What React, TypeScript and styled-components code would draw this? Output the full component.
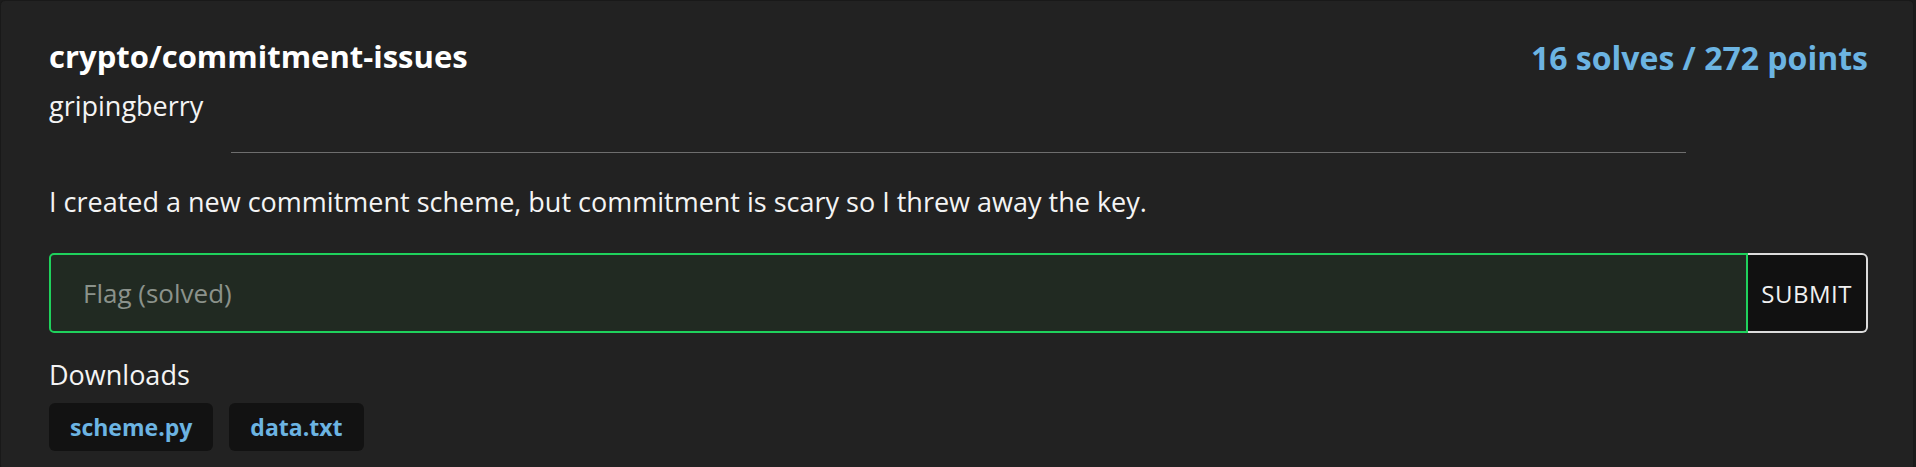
import styled, { createGlobalStyle } from "styled-components";

interface Challenge {
  category: string;
  name: string;
  author: string;
  solves: number;
  points: number;
  description: string;
  files: string[];
}

const challenge: Challenge = {
  category: "crypto",
  name: "commitment-issues",
  author: "gripingberry",
  solves: 16,
  points: 272,
  description:
    "I created a new commitment scheme, but commitment is scary so I threw away the key.",
  files: ["scheme.py", "data.txt"],
};

const GlobalStyle = createGlobalStyle`
  html, body {
    margin: 0;
    background: #1b1b1b;
  }
  body {
    font-family: "Open Sans", "Noto Sans", sans-serif;
    color: #f4f4f4;
  }
`;

const Card = styled.section`
  box-sizing: border-box;
  width: 1914px;
  min-height: 470px;
  background: #222222;
  border: 1px solid #191919;
  border-radius: 5px;
  padding: 35px 45px 0 48px;
`;

const Header = styled.div`
  display: flex;
  justify-content: space-between;
  align-items: flex-start;
`;

const Title = styled.h2`
  margin: 0;
  font-size: 31px;
  line-height: 40px;
  font-weight: 700;
  color: #ffffff;
`;

const Author = styled.p`
  margin: 12px 0 0 0;
  font-size: 27px;
  line-height: 36px;
  font-weight: 400;
`;

const Score = styled.div`
  margin-top: 0;
  font-size: 32px;
  line-height: 44px;
  font-weight: 700;
  color: #6cb4e2;
`;

const Divider = styled.hr`
  width: 80%;
  margin: 28px auto 0 auto;
  border: 0;
  border-top: 1px solid #6e6e6e;
`;

const Description = styled.p`
  margin: 29px 0 0 0;
  font-size: 27px;
  line-height: 40px;
`;

const FlagForm = styled.form`
  display: flex;
  margin-top: 31px;
  height: 80px;
`;

const FlagInput = styled.input`
  flex: 1;
  box-sizing: border-box;
  height: 100%;
  padding: 0 0 0 32px;
  background: #212a22;
  border: 2px solid #1fd15c;
  border-radius: 5px 0 0 5px;
  color: #f4f4f4;
  font-family: inherit;
  font-size: 26px;
  outline: none;

  &::placeholder {
    color: #8b928b;
  }
`;

const SubmitButton = styled.button`
  box-sizing: border-box;
  height: 100%;
  padding: 0 14px 0 13px;
  background: #111111;
  border: 2px solid #dcdcdc;
  border-left: 0;
  border-radius: 0 6px 6px 0;
  color: #f0f0f0;
  font-family: inherit;
  font-size: 24px;
  letter-spacing: 0.5px;
  cursor: pointer;
`;

const DownloadsLabel = styled.p`
  margin: 25px 0 0 0;
  font-size: 27px;
  line-height: 34px;
`;

const FileList = styled.div`
  display: flex;
  gap: 16px;
  margin-top: 11px;
`;

const FileButton = styled.a`
  display: inline-flex;
  align-items: center;
  height: 48px;
  padding: 0 21px;
  background: #121212;
  border-radius: 6px;
  color: #6cb4e2;
  font-size: 23px;
  font-weight: 700;
  text-decoration: none;
`;

const App = () => {
  return (
    <>
      <GlobalStyle />
      <Card>
        <Header>
          <div>
            <Title>
              {challenge.category}/{challenge.name}
            </Title>
            <Author>{challenge.author}</Author>
          </div>
          <Score>
            {challenge.solves} solves / {challenge.points} points
          </Score>
        </Header>
        <Divider />
        <Description>{challenge.description}</Description>
        <FlagForm onSubmit={(e) => e.preventDefault()}>
          <FlagInput placeholder="Flag (solved)" />
          <SubmitButton type="submit">SUBMIT</SubmitButton>
        </FlagForm>
        <DownloadsLabel>Downloads</DownloadsLabel>
        <FileList>
          {challenge.files.map((file) => (
            <FileButton key={file} href="#">
              {file}
            </FileButton>
          ))}
        </FileList>
      </Card>
    </>
  );
};

export default App;
